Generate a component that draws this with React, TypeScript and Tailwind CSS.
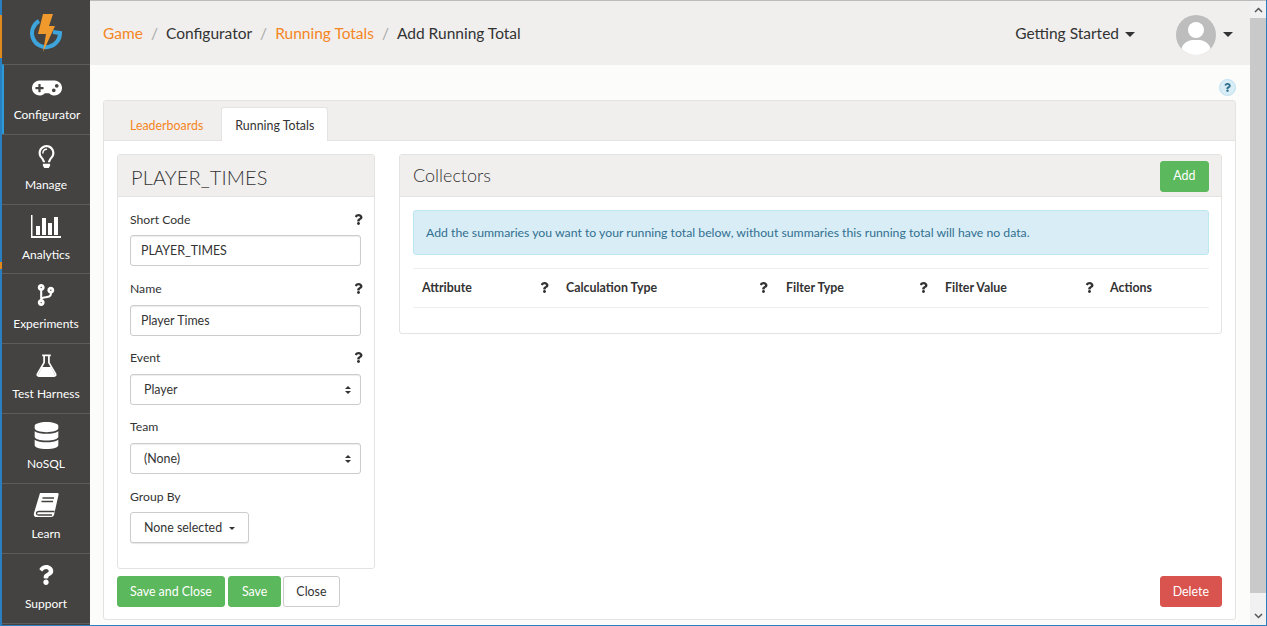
import { FaCodeBranch, FaDatabase, FaGamepad, FaQuestion, FaRegLightbulb } from "react-icons/fa";
import type { ReactNode } from "react";

function BarChart() {
  return (
    <svg width="30" height="23" viewBox="0 0 30 23" fill="white">
      <path d="M0 0 H1.5 V21 H30 V23 H0 Z" />
      <rect x="5" y="11" width="4" height="9" />
      <rect x="11" y="3" width="4" height="17" />
      <rect x="17" y="8" width="4" height="12" />
      <rect x="23" y="2" width="4" height="18" />
    </svg>
  );
}

function Flask() {
  return (
    <svg width="23" height="23" viewBox="0 0 24 24">
      <path d="M7.5 1.5 H16.5 M9.5 1.5 V9 L2.5 21 Q2 23 4 23 H20 Q22 23 21.5 21 L14.5 9 V1.5" fill="none" stroke="white" strokeWidth="1.8" />
      <path d="M7.5 13.5 H16.5 L21.5 23 H2.5 Z" fill="white" />
    </svg>
  );
}

function Book() {
  return (
    <svg width="26" height="26" viewBox="0 0 26 26">
      <path d="M7 1 H24.5 Q26 1 25.5 3 L21 23 Q20.5 25 18 25 H4 Q0 25 1 21 Z" fill="white" />
      <path d="M21.5 19.5 H6 Q3.5 19.5 3.5 21.5 Q3.5 23 5.5 23 H19" fill="none" stroke="#444341" strokeWidth="1.3" />
      <path d="M9.5 6 H21 M8.5 9.5 H20" stroke="#444341" strokeWidth="1.5" />
    </svg>
  );
}

const nav = [
  { label: "Configurator", icon: <FaGamepad size={30} className="mt-[4px]" />, active: true },
  { label: "Manage", icon: <FaRegLightbulb size={23} /> },
  { label: "Analytics", icon: <BarChart />, short: true },
  { label: "Experiments", icon: <FaCodeBranch size={22} /> },
  { label: "Test Harness", icon: <Flask /> },
  { label: "NoSQL", icon: <FaDatabase size={27} /> },
  { label: "Learn", icon: <Book /> },
  { label: "Support", icon: <FaQuestion size={20} /> },
];

function Logo() {
  return (
    <svg width="34" height="40" viewBox="0 0 34 40">
      <path d="M10 8 A14 14 0 1 0 31 20 L24 19" fill="none" stroke="#3da5dc" strokeWidth="4" />
      <path d="M14 1 L24 1 L20 13 L26 13 L14 39 L17 21 L9 21 Z" fill="#f09a2e" />
    </svg>
  );
}

function Help({ className = "" }: { className?: string }) {
  return <FaQuestion size={11} className={`-mr-[3px] text-[#333] ${className}`} />;
}

function Caret({ className }: { className: string }) {
  return <span className={`inline-block h-0 w-0 border-x-[5px] border-t-[5px] border-x-transparent ${className}`} />;
}

function Field({ label, help, labelGap, gap, children }: { label: string; help?: boolean; labelGap: string; gap: string; children: ReactNode }) {
  return (
    <div className={gap}>
      <div className={`flex h-[18px] items-center justify-between pt-[1px] text-[12.2px] leading-[18px] ${labelGap}`}>
        <span>{label}</span>
        {help && <Help />}
      </div>
      {children}
    </div>
  );
}

function Select({ value }: { value: string }) {
  return (
    <div className="flex h-[31px] items-center justify-between rounded-[3px] border border-[#ccc] bg-white pl-[13px] pr-[9px] pt-[1px] text-[12.4px] shadow-[inset_0_1px_1px_rgba(0,0,0,0.075)]">
      <span>{value}</span>
      <span className="flex flex-col gap-[2px]">
        <span className="h-0 w-0 border-x-[3px] border-b-[3px] border-x-transparent border-b-[#333]" />
        <span className="h-0 w-0 border-x-[3px] border-t-[3px] border-x-transparent border-t-[#333]" />
      </span>
    </div>
  );
}

function Input({ value }: { value: string }) {
  return (
    <div className="flex h-[31px] items-center rounded-[3px] border border-[#ccc] bg-white px-[10px] pt-[1px] text-[12.4px] shadow-[inset_0_1px_1px_rgba(0,0,0,0.075)]">
      {value}
    </div>
  );
}

function Btn({ className, children }: { className: string; children: ReactNode }) {
  return (
    <button className={`flex h-[31px] items-center rounded-[3px] border pt-[1px] text-[12.4px] ${className}`}>
      {children}
    </button>
  );
}

const columns = [
  { label: "Attribute", width: "w-[144px] pr-[19px]" },
  { label: "Calculation Type", width: "w-[220px] pr-[20px]" },
  { label: "Filter Type", width: "w-[159px] pr-[19px]" },
  { label: "Filter Value", width: "w-[165px] pr-[18px]" },
];

export default function App() {
  return (
    <div className="flex h-[626px] w-[1267px] overflow-hidden border-r border-b border-r-[#2a7fc1] border-b-[#2a7fc1] bg-[#fcfcfa] font-['Lato',sans-serif] text-[#333]">
      <div className="flex w-[2px] shrink-0 flex-col bg-[#2a7fc1]">
        <div className="h-[15px] shrink-0" />
        <div className="h-[43px] shrink-0 bg-[#e08a1e]" />
        <div className="h-[204px] shrink-0" />
        <div className="h-[7px] shrink-0 bg-[#e08a1e]" />
      </div>
      <aside className="flex w-[88px] shrink-0 flex-col bg-[#444341] text-white">
        <div className="flex h-[64px] shrink-0 items-center justify-center pt-[2px]">
          <Logo />
        </div>
        {nav.map((item) => (
          <div
            key={item.label}
            className={`flex shrink-0 flex-col items-center border-t border-[#5d5c5a] pt-[7px] ${item.short ? "h-[69px]" : "h-[70px]"} ${item.active ? "border-l-2 border-l-[#2a9bd8]" : ""}`}
          >
            <div className="flex h-[28px] items-center">{item.icon}</div>
            <div className="mt-[7px] text-[12px] leading-[16px]">{item.label}</div>
          </div>
        ))}
        <div className="flex-1 border-t border-[#5d5c5a]" />
      </aside>

      <div className="flex min-w-0 flex-1 flex-col border-t border-[#bbb]">
        <header className="flex h-[64px] shrink-0 items-center justify-between bg-[#f0efee] pl-[13px] pr-[17px] pt-[2px] text-[15.5px]">
          <nav className="flex items-center gap-[8px]">
            <span className="text-[#f5861f]">Game</span>
            <span className="text-[#aaa]">/</span>
            <span>Configurator</span>
            <span className="text-[#aaa]">/</span>
            <span className="text-[#f5861f]">Running Totals</span>
            <span className="text-[#aaa]">/</span>
            <span>Add Running Total</span>
          </nav>
          <div className="flex items-center">
            <span>Getting Started</span>
            <Caret className="ml-[6px] border-t-[#333]" />
            <div className="relative ml-[41px] mt-[2px] h-[40px] w-[40px] overflow-hidden rounded-full bg-[#bdbdbd]">
              <div className="absolute left-[12px] top-[7px] h-[16px] w-[16px] rounded-full bg-white" />
              <div className="absolute left-[5px] top-[25px] h-[24px] w-[30px] rounded-full bg-white" />
            </div>
            <Caret className="ml-[7px] border-t-[#333]" />
          </div>
        </header>

        <main className="flex min-h-0 flex-1 flex-col pl-[13px] pr-[14px]">
          <div className="flex h-[35px] shrink-0 items-end justify-end pb-[4px]">
            <span className="flex h-[17px] w-[17px] items-center justify-center rounded-full border border-[#bfe0f2] bg-[#d9edf7] text-[#31708f]">
              <FaQuestion size={9} />
            </span>
          </div>
          <section className="mb-[5px] flex min-h-0 flex-1 flex-col rounded-[3px] border border-[#e3e3e1] bg-white">
            <div className="flex h-[40px] shrink-0 items-end border-b border-[#e3e3e1] bg-[#f0efee] pl-[13px]">
              <div className="flex h-[33px] items-center pl-[13px] pr-[18px] pt-[6px] text-[12.4px] text-[#f5861f]">Leaderboards</div>
              <div className="-mb-px flex h-[34px] items-center rounded-t-[3px] border border-b-0 border-[#e3e3e1] bg-white px-[13px] pt-[4px] text-[12.4px]">
                Running Totals
              </div>
            </div>

            <div className="flex min-h-0 flex-1 flex-col px-[13px] pb-[12px] pt-[13px]">
              <div className="flex min-h-0 flex-1 gap-[24px]">
                <div className="flex w-[258px] shrink-0 flex-col rounded-[3px] border border-[#e3e3e1]">
                  <div className="flex h-[42px] shrink-0 items-center border-b border-[#e3e3e1] bg-[#f0efee] px-[13px] pt-[2px] text-[20px] font-light tracking-[0.1px]">
                    PLAYER_TIMES
                  </div>
                  <div className="pl-[12px] pr-[13px] pt-[13px]">
                    <Field label="Short Code" help labelGap="mb-[7px]" gap="mb-[13px]">
                      <Input value="PLAYER_TIMES" />
                    </Field>
                    <Field label="Name" help labelGap="mb-[8px]" gap="mb-[12px]">
                      <Input value="Player Times" />
                    </Field>
                    <Field label="Event" help labelGap="mb-[8px]" gap="mb-[12px]">
                      <Select value="Player" />
                    </Field>
                    <Field label="Team" labelGap="mb-[8px]" gap="mb-[13px]">
                      <Select value="(None)" />
                    </Field>
                    <Field label="Group By" labelGap="mb-[7px]" gap="mb-[13px]">
                      <button className="flex h-[31px] items-center rounded-[3px] border border-[#ccc] bg-white px-[13px] pt-[1px] text-[12.4px] shadow-[0_1px_1px_rgba(0,0,0,0.1)]">
                        None selected
                        <span className="ml-[7px] h-0 w-0 border-x-[3px] border-t-[3px] border-x-transparent border-t-[#333]" />
                      </button>
                    </Field>
                  </div>
                </div>

                <div className="flex h-[180px] min-w-0 flex-1 flex-col rounded-[3px] border border-[#e3e3e1]">
                  <div className="flex h-[42px] shrink-0 items-center justify-between border-b border-[#e3e3e1] bg-[#f0efee] pl-[13px] pr-[12px]">
                    <span className="text-[18px] font-light">Collectors</span>
                    <Btn className="mt-[1px] border-[#5cb85c] bg-[#5cb85c] px-[12.5px] text-white">Add</Btn>
                  </div>
                  <div className="pl-[13px] pr-[12px] pt-[13px]">
                    <div className="flex h-[45px] items-center rounded-[3px] border border-[#bce8f1] bg-[#d9edf7] px-[12px] pt-[1px] text-[12.25px] text-[#31708f]">
                      Add the summaries you want to your running total below, without summaries this running total will have no data.
                    </div>
                    <div className="mt-[13px] flex h-[40px] items-center border-y border-[#eee] pl-[9px] text-[12.4px] font-bold">
                      {columns.map((c) => (
                        <div key={c.label} className={`flex shrink-0 items-center justify-between ${c.width}`}>
                          <span>{c.label}</span>
                          <Help />
                        </div>
                      ))}
                      <span>Actions</span>
                    </div>
                  </div>
                </div>
              </div>

              <div className="mt-[7px] flex shrink-0 items-center">
                <Btn className="border-[#5cb85c] bg-[#5cb85c] px-[12px] text-white">Save and Close</Btn>
                <Btn className="ml-[3px] border-[#5cb85c] bg-[#5cb85c] px-[13px] text-white">Save</Btn>
                <Btn className="ml-[2px] border-[#ccc] bg-white px-[12px]">Close</Btn>
                <Btn className="ml-auto border-[#d9534f] bg-[#d9534f] px-[12px] text-white">Delete</Btn>
              </div>
            </div>
          </section>
        </main>
      </div>

      <div className="flex w-[16px] shrink-0 flex-col border-t border-[#bbb] bg-[#f1f1f1]">
        <div className="flex h-[17px] items-center justify-center text-[#555]">
          <svg width="9" height="6" viewBox="0 0 9 6"><path d="M1 5 L4.5 1.5 L8 5" fill="none" stroke="currentColor" strokeWidth="1.5" /></svg>
        </div>
        <div className="flex-1 bg-[#c9c9c9]" />
        <div className="flex h-[32px] items-end justify-center pb-[6px] text-[#555]">
          <svg width="9" height="6" viewBox="0 0 9 6"><path d="M1 1 L4.5 4.5 L8 1" fill="none" stroke="currentColor" strokeWidth="1.5" /></svg>
        </div>
      </div>
    </div>
  );
}
